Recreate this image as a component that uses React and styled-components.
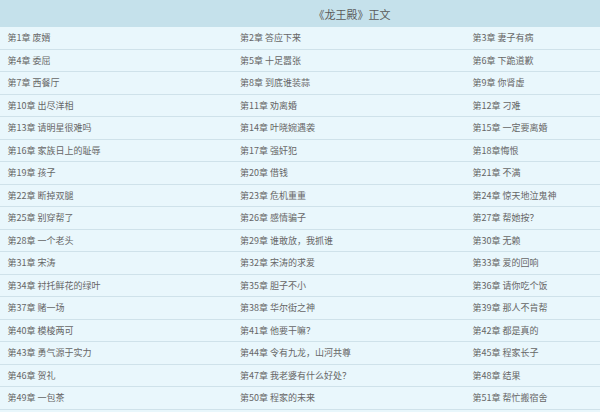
import React from "react";
import styled, { createGlobalStyle } from "styled-components";

const Global = createGlobalStyle`
  html, body { margin: 0; padding: 0; background: #e9f7fc; overflow: hidden; }
  body { font-family: "Noto Sans CJK SC", "Noto Sans", sans-serif; }
`;

const Wrap = styled.div`
  width: 600px;
  overflow: hidden;
  background: #e9f7fc;
`;

const Header = styled.div`
  height: 27px;
  background: #c5e1eb;
  display: flex;
  align-items: center;
  justify-content: center;
  font-size: 11px;
  color: #5a5a5a;
  padding-left: 104px;
  box-sizing: border-box;
`;

const Row = styled.div`
  display: grid;
  grid-template-columns: 232.5px 232.5px 1fr;
  height: 22.5px;
  box-sizing: border-box;
  border-bottom: 1px solid #cfe2ea;
`;

const Cell = styled.a`
  display: flex;
  align-items: center;
  padding-left: 7.5px;
  font-size: 9px;
  color: #666;
  text-decoration: none;
  white-space: nowrap;
`;

const chapters = [
  "废婿", "答应下来", "妻子有病",
  "委屈", "十足嚣张", "下跪道歉",
  "西餐厅", "到底谁装蒜", "你肾虚",
  "出尽洋相", "劝离婚", "刁难",
  "请明星很难吗", "叶晓婉遇袭", "一定要离婚",
  "家族日上的耻辱", "强奸犯", "悔恨",
  "孩子", "借钱", "不满",
  "断掉双腿", "危机重重", "惊天地泣鬼神",
  "别穿帮了", "感情骗子", "帮她按？",
  "一个老头", "谁敢放，我抓谁", "无赖",
  "宋涛", "宋涛的求爱", "爱的回响",
  "衬托鲜花的绿叶", "胆子不小", "请你吃个饭",
  "赌一场", "华尔街之神", "那人不肯帮",
  "模棱两可", "他要干嘛？", "都是真的",
  "勇气源于实力", "令有九龙，山河共尊", "程家长子",
  "贺礼", "我老婆有什么好处？", "结果",
  "一包茶", "程家的未来", "帮忙搬宿舍",
];

export default function App() {
  const rows = [];
  for (let i = 0; i < chapters.length; i += 3) rows.push(chapters.slice(i, i + 3));
  return (
    <Wrap>
      <Global />
      <Header>《龙王殿》正文</Header>
      {rows.map((r, ri) => (
        <Row key={ri}>
          {r.map((t, ci) => {
            const n = ri * 3 + ci + 1;
            return (
              <Cell key={n} href="#">
                {n === 18 ? `第${n}章${t}` : `第${n}章 ${t}`}
              </Cell>
            );
          })}
        </Row>
      ))}
    </Wrap>
  );
}
